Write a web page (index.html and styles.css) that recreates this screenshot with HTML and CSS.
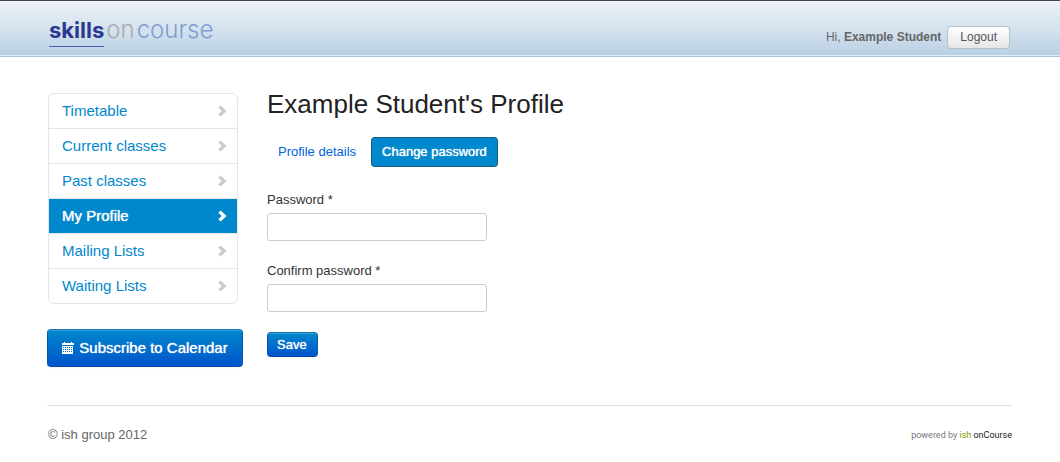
FILE: index.html
```html
<!DOCTYPE html>
<html lang="en">
<head>
<meta charset="utf-8">
<title>Example Student's Profile</title>
<link rel="stylesheet" href="styles.css">
</head>
<body>
<svg class="sprites" aria-hidden="true">
  <symbol id="chevron" viewBox="0 0 9 12"><path d="M2.6 0.4 L8.6 6 L2.6 11.6 L0.3 9.3 L3.8 6 L0.3 2.7 Z"/></symbol>
</svg>
<header class="topbar">
  <a class="logo" href="#"><span class="logo-skills">skills</span><span class="logo-on">on</span><span class="logo-course">course</span></a>
  <div class="account">
    <span>Hi, <strong>Example Student</strong></span>
    <button class="logout" type="button">Logout</button>
  </div>
</header>
<div class="layout">
  <aside class="sidebar">
    <nav class="menu">
      <a href="#">Timetable<svg class="chevron"><use href="#chevron"/></svg></a>
      <a href="#">Current classes<svg class="chevron"><use href="#chevron"/></svg></a>
      <a href="#">Past classes<svg class="chevron"><use href="#chevron"/></svg></a>
      <a class="active" href="#">My Profile<svg class="chevron"><use href="#chevron"/></svg></a>
      <a href="#">Mailing Lists<svg class="chevron"><use href="#chevron"/></svg></a>
      <a href="#">Waiting Lists<svg class="chevron"><use href="#chevron"/></svg></a>
    </nav>
    <button class="primary subscribe" type="button">
      <svg class="calendar" viewBox="0 0 12 12" aria-hidden="true" shape-rendering="crispEdges">
        <path fill="#fff" d="M0 1h2V0h1v1h6V0h1v1h2v2H0zM0 4h11v8H0z"/>
        <path stroke="#0868cf" stroke-width="1" stroke-dasharray="1 1" d="M1 5.5h9M1 7.5h9M1 9.5h9"/>
      </svg>
      Subscribe to Calendar
    </button>
  </aside>
  <main class="content">
    <h1>Example Student's Profile</h1>
    <nav class="tabs">
      <a href="#">Profile details</a>
      <a class="active" href="#">Change password</a>
    </nav>
    <form class="form">
      <label for="password">Password *</label>
      <input id="password" type="password">
      <label for="confirm">Confirm password *</label>
      <input id="confirm" type="password">
      <button class="primary save" type="button">Save</button>
    </form>
  </main>
</div>
<footer class="footer">
  <span>© ish group 2012</span>
  <a class="powered" href="#">powered by <span class="ish">ish</span> <span class="oncourse">onCourse</span></a>
</footer>
</body>
</html>
```
FILE: styles.css
```css
* {
  box-sizing: border-box;
}

body {
  margin: 0;
  background: #fff;
  color: #333;
  font: 13px/18px "Liberation Sans", Arial, sans-serif;
}

a {
  color: #0088cc;
  text-decoration: none;
}

button,
input {
  font: inherit;
}

.sprites {
  display: none;
}

.topbar {
  display: flex;
  justify-content: space-between;
  height: 57px;
  padding: 0 50px 0 49px;
  border-top: 1px solid #444;
  border-bottom: 1px solid #a4c6e0;
  background: linear-gradient(#edf1f8, #d5e3ee 50%, #b8cfe4);
  box-shadow: inset 0 -1px #e4eef6;
}

.logo {
  display: flex;
  align-items: flex-start;
  padding-top: 15px;
  font: 300 24px/28px Inter, sans-serif;
}

.logo-skills {
  height: 31px;
  border-bottom: 1px solid #4a5fb4;
  color: #2b3990;
  font-weight: 700;
  font-size: 22px;
}

.logo-on {
  padding: 0 2px;
  color: #a9abae;
}

.logo-course {
  color: #849cd0;
}

.account {
  display: flex;
  align-items: center;
  gap: 6px;
  padding-top: 17px;
  color: #666;
  font-size: 12px;
}

.logout {
  height: 23px;
  padding: 0 12px;
  border: 1px solid #b8c0c8;
  border-radius: 4px;
  background: linear-gradient(#fff, #e6e6e6);
  color: #555;
}

.layout {
  display: flex;
  align-items: flex-start;
  gap: 24px;
  padding: 36px 48px 38px 47px;
}

.sidebar {
  flex: none;
  width: 196px;
}

.menu {
  margin: 0 5px 25px 1px;
  border: 1px solid #e5e5e5;
  border-radius: 6px;
}

.menu a {
  display: flex;
  align-items: center;
  justify-content: space-between;
  height: 35px;
  padding: 0 10px 0 13px;
  border-bottom: 1px solid #e5e5e5;
  font-size: 15px;
}

.menu a:last-child {
  height: 34px;
  border-bottom: 0;
}

.menu .active {
  background: #0088cc;
  color: #fff;
  text-shadow: 0 0 1px #fff;
}

.chevron {
  width: 9px;
  height: 12px;
  fill: #ccc;
}

.active .chevron {
  fill: #fff;
}

.primary {
  border: 1px solid #0a58ad;
  border-color: #1074b5 #0a58ad #0949a5;
  border-radius: 4px;
  background: linear-gradient(#0088cc, #0055cc);
  box-shadow: inset 0 1px #339fd6, 0 1px 2px #0000000d;
  color: #fff;
  text-shadow: 0 0 1px #fff;
}

.subscribe {
  display: flex;
  align-items: center;
  justify-content: center;
  gap: 5px;
  width: 100%;
  height: 38px;
  padding: 0;
  font-size: 15px;
  white-space: nowrap;
}

.calendar {
  width: 12px;
  height: 12px;
}

.content {
  flex: 1;
}

h1 {
  margin: 0 0 22px;
  color: #222;
  font-size: 26px;
  font-weight: 400;
  line-height: 22px;
}

.tabs {
  display: flex;
  gap: 4px;
  margin-bottom: 24px;
}

.tabs a {
  padding: 5px 10px;
  border: 1px solid transparent;
  border-radius: 4px;
  color: #0064dc;
}

.tabs .active {
  border: 1px dotted #333;
  background: #0088cc;
  color: #fff;
  text-shadow: 0 0 1px #fff;
}

.form {
  display: flex;
  flex-direction: column;
  align-items: flex-start;
}

.form label {
  margin-bottom: 4px;
}

.form input {
  width: 220px;
  height: 28px;
  margin-bottom: 21px;
  padding: 4px;
  border: 1px solid #ccc;
  border-radius: 3px;
  background: #fff;
}

.form .save {
  height: 25px;
  margin-top: -1px;
  padding: 0 10px 0 9px;
}

.footer {
  display: flex;
  align-items: center;
  justify-content: space-between;
  margin: 0 48px 0 47px;
  padding: 20px 0 0 1px;
  border-top: 1px solid #e0e0e0;
  color: #666;
}

.powered {
  color: #777;
  font-family: Roboto, sans-serif;
  font-size: 9px;
}

.ish {
  color: #7a9f00;
}

.oncourse {
  color: #222;
}
```
